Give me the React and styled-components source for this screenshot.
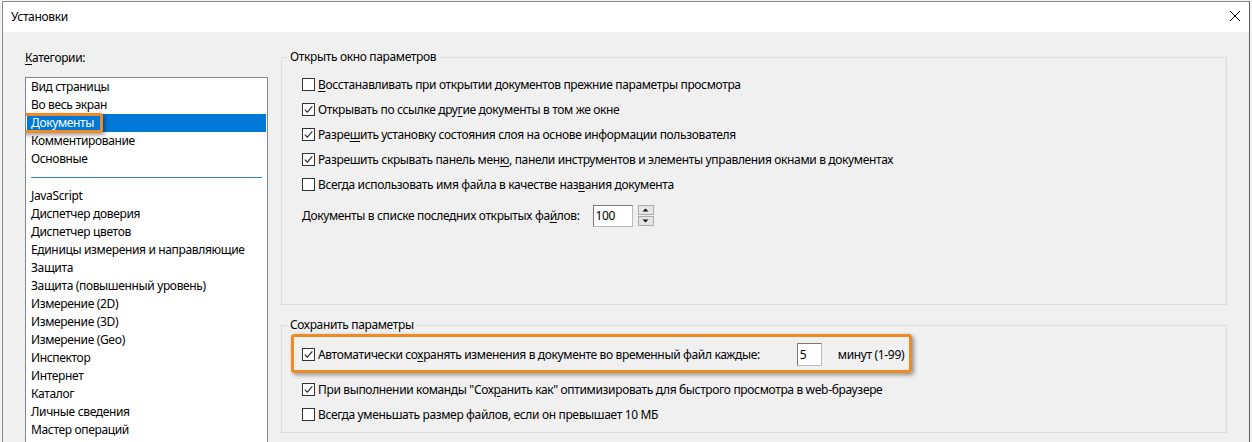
import React from 'react';
import styled, { createGlobalStyle } from 'styled-components';

const GlobalStyle = createGlobalStyle`
  html, body {
    margin: 0;
    padding: 0;
  }
  body {
    width: 1252px;
    height: 442px;
    overflow: hidden;
    background: #f4f4f4;
    font-family: "Noto Sans", "Liberation Sans", sans-serif;
    font-size: 12px;
    letter-spacing: -0.35px;
    color: #000;
  }
`;

const Screen = styled.div`
  width: 1252px;
  height: 442px;
  overflow: hidden;
  padding-top: 1px;
  box-sizing: border-box;
`;

const Window = styled.div`
  margin-left: 2px;
  width: 1248px;
  height: 441px;
  box-sizing: border-box;
  border: 1px solid #8a8a8a;
  border-bottom: none;
  border-right-color: #5f5f5f;
  background: #f0f0f0;
  display: flex;
  flex-direction: column;
`;

const TitleBar = styled.div`
  height: 30px;
  flex: none;
  background: #fff;
  display: flex;
  align-items: center;
  justify-content: space-between;
  padding: 0 9px 2px 8px;
  box-sizing: border-box;
`;

const Title = styled.span`
  font-size: 12px;
`;

const Body = styled.div`
  flex: 1;
  min-height: 0;
  display: flex;
  gap: 13px;
  padding-left: 22px;
`;

const LeftCol = styled.div`
  width: 243px;
  display: flex;
  flex-direction: column;
`;

const Caption = styled.div`
  margin-top: 18px;
  line-height: 16px;
`;

const Key = styled.span`
  text-decoration: underline;
  text-underline-offset: 2px;
`;

const ListBox = styled.div`
  margin-top: 11px;
  flex: 1;
  border: 1px solid #828790;
  border-bottom: none;
  background: #fff;
  overflow: hidden;
`;

const Item = styled.div`
  position: relative;
  height: 18px;
  line-height: 18px;
  margin: 0 1px;
  padding-left: 4px;
  white-space: nowrap;
  background: ${(p) => (p.$selected ? '#0078d7' : 'transparent')};
  color: ${(p) => (p.$selected ? '#fff' : '#000')};
`;

const Separator = styled.div`
  height: 19px;
  display: flex;
  align-items: center;
  padding: 0 5px;

  &::after {
    content: '';
    flex: 1;
    height: 1px;
    background: #2f7fc1;
  }
`;

const Callout = styled.div`
  position: absolute;
  box-sizing: border-box;
  border: 3px solid #f08a24;
  border-radius: 3px;
  box-shadow: 2px 2px 4px rgba(0, 0, 0, 0.4);
  pointer-events: none;
`;

const ItemCallout = styled(Callout)`
  left: -7px;
  top: -1px;
  width: 83px;
  height: 20px;
`;

const RowCallout = styled(Callout)`
  left: -11px;
  top: -9px;
  right: -8px;
  bottom: -7px;
`;

const RightCol = styled.div`
  width: 946px;
  padding-top: 25px;
  display: flex;
  flex-direction: column;
`;

const Group = styled.div`
  position: relative;
  box-sizing: border-box;
  height: ${(p) => p.$height}px;
  margin-top: ${(p) => p.$gap || 0}px;
  border: 1px solid #dcdcdc;
  padding: ${(p) => p.$pad}px 0 0 20px;
  display: flex;
  flex-direction: column;
  align-items: flex-start;
`;

const Legend = styled.span`
  position: absolute;
  top: -9px;
  left: 5px;
  padding: 0 3px;
  line-height: 16px;
  background: #f0f0f0;
`;

const Row = styled.div`
  position: relative;
  display: flex;
  align-items: center;
  height: ${(p) => p.$h || 25}px;
  margin-top: ${(p) => p.$mt || 0}px;
  gap: 3px;
  white-space: nowrap;
`;

const Box = styled.span`
  width: 13px;
  height: 13px;
  box-sizing: border-box;
  border: 1px solid #333;
  background: #fff;
  display: flex;
  align-items: center;
  justify-content: center;
  flex: none;
`;

const Field = styled.input`
  box-sizing: border-box;
  width: ${(p) => p.$w}px;
  height: ${(p) => p.$h || 22}px;
  margin-left: ${(p) => p.$ml || 0}px;
  border: 1px solid #7a7a7a;
  border-right-color: #b9b9b9;
  border-bottom-color: #b9b9b9;
  background: #fff;
  padding: 0 2px;
  font: inherit;
  letter-spacing: inherit;
  color: #000;
  outline: none;
`;

const Spinner = styled.div`
  display: flex;
  flex-direction: column;
  gap: 1px;
  margin-left: 2px;
`;

const SpinBtn = styled.span`
  width: 16px;
  height: 10px;
  box-sizing: border-box;
  border: 1px solid #adadad;
  background: #e5e5e5;
  display: flex;
  align-items: center;
  justify-content: center;
`;

const Suffix = styled.span`
  margin-left: 13px;
`;

const Check = ({ checked }) => (
  <Box>
    {checked && (
      <svg width="11" height="11" viewBox="0 0 11 11">
        <path d="M1.8 5.6 L4.3 8.1 L9.3 2.4" fill="none" stroke="#222" strokeWidth="1.1" />
      </svg>
    )}
  </Box>
);

const Arrow = ({ up }) => (
  <svg width="7" height="4" viewBox="0 0 7 4">
    <path d={up ? 'M0.5 3.5 L3.5 0.5 L6.5 3.5 Z' : 'M0.5 0.5 L3.5 3.5 L6.5 0.5 Z'} fill="#111" />
  </svg>
);

const categories = [
  'Вид страницы',
  'Во весь экран',
  'Документы',
  'Комментирование',
  'Основные',
  null,
  'JavaScript',
  'Диспетчер доверия',
  'Диспетчер цветов',
  'Единицы измерения и направляющие',
  'Защита',
  'Защита (повышенный уровень)',
  'Измерение (2D)',
  'Измерение (3D)',
  'Измерение (Geo)',
  'Инспектор',
  'Интернет',
  'Каталог',
  'Личные сведения',
  'Мастер операций',
];

export default function App() {
  return (
    <Screen>
      <GlobalStyle />
      <Window>
        <TitleBar>
          <Title>Установки</Title>
          <svg width="10" height="10" viewBox="0 0 10 10">
            <path d="M0 0 L10 10 M10 0 L0 10" stroke="#000" strokeWidth="1" />
          </svg>
        </TitleBar>
        <Body>
          <LeftCol>
            <Caption>
              <Key>К</Key>атегории:
            </Caption>
            <ListBox>
              {categories.map((name, i) =>
                name === null ? (
                  <Separator key={i} />
                ) : (
                  <Item key={i} $selected={name === 'Документы'}>
                    {name}
                    {name === 'Документы' && <ItemCallout />}
                  </Item>
                )
              )}
            </ListBox>
          </LeftCol>
          <RightCol>
            <Group $height={248} $pad={14}>
              <Legend>Открыть окно параметров</Legend>
              <Row>
                <Check />
                <span>
                  <Key>В</Key>осстанавливать при открытии документов прежние параметры просмотра
                </span>
              </Row>
              <Row>
                <Check checked />
                <span>
                  Открывать по ссылке дру<Key>г</Key>ие документы в том же окне
                </span>
              </Row>
              <Row>
                <Check checked />
                <span>
                  Разре<Key>ш</Key>ить установку состояния слоя на основе информации пользователя
                </span>
              </Row>
              <Row>
                <Check checked />
                <span>
                  Разрешить скрывать панель мен<Key>ю</Key>, панели инструментов и элементы управления окнами в документах
                </span>
              </Row>
              <Row>
                <Check />
                <span>
                  Всегда использовать имя файла в качестве наз<Key>в</Key>ания документа
                </span>
              </Row>
              <Row $h={23} $mt={7}>
                <span>
                  Документы в списке последних открытых фа<Key>й</Key>лов:
                </span>
                <Field $w={40} $ml={10} defaultValue="100" />
                <Spinner>
                  <SpinBtn>
                    <Arrow up />
                  </SpinBtn>
                  <SpinBtn>
                    <Arrow />
                  </SpinBtn>
                </Spinner>
              </Row>
            </Group>
            <Group $height={108} $pad={17} $gap={20}>
              <Legend>Сохранить параметры</Legend>
              <Row $h={23}>
                <Check checked />
                <span>
                  Автоматически со<Key>х</Key>ранять изменения в документе во временный файл каждые:
                </span>
                <Field $w={25} $h={23} $ml={34} defaultValue="5" />
                <Suffix>минут (1-99)</Suffix>
                <RowCallout />
              </Row>
              <Row $mt={11}>
                <Check checked />
                <span>
                  При выполнении команды "Сох<Key>р</Key>анить как" оптимизировать для быстрого просмотра в web-браузере
                </span>
              </Row>
              <Row>
                <Check />
                <span>Всегда уменьшать размер файлов, если он превышает 10 МБ</span>
              </Row>
            </Group>
          </RightCol>
        </Body>
      </Window>
    </Screen>
  );
}
